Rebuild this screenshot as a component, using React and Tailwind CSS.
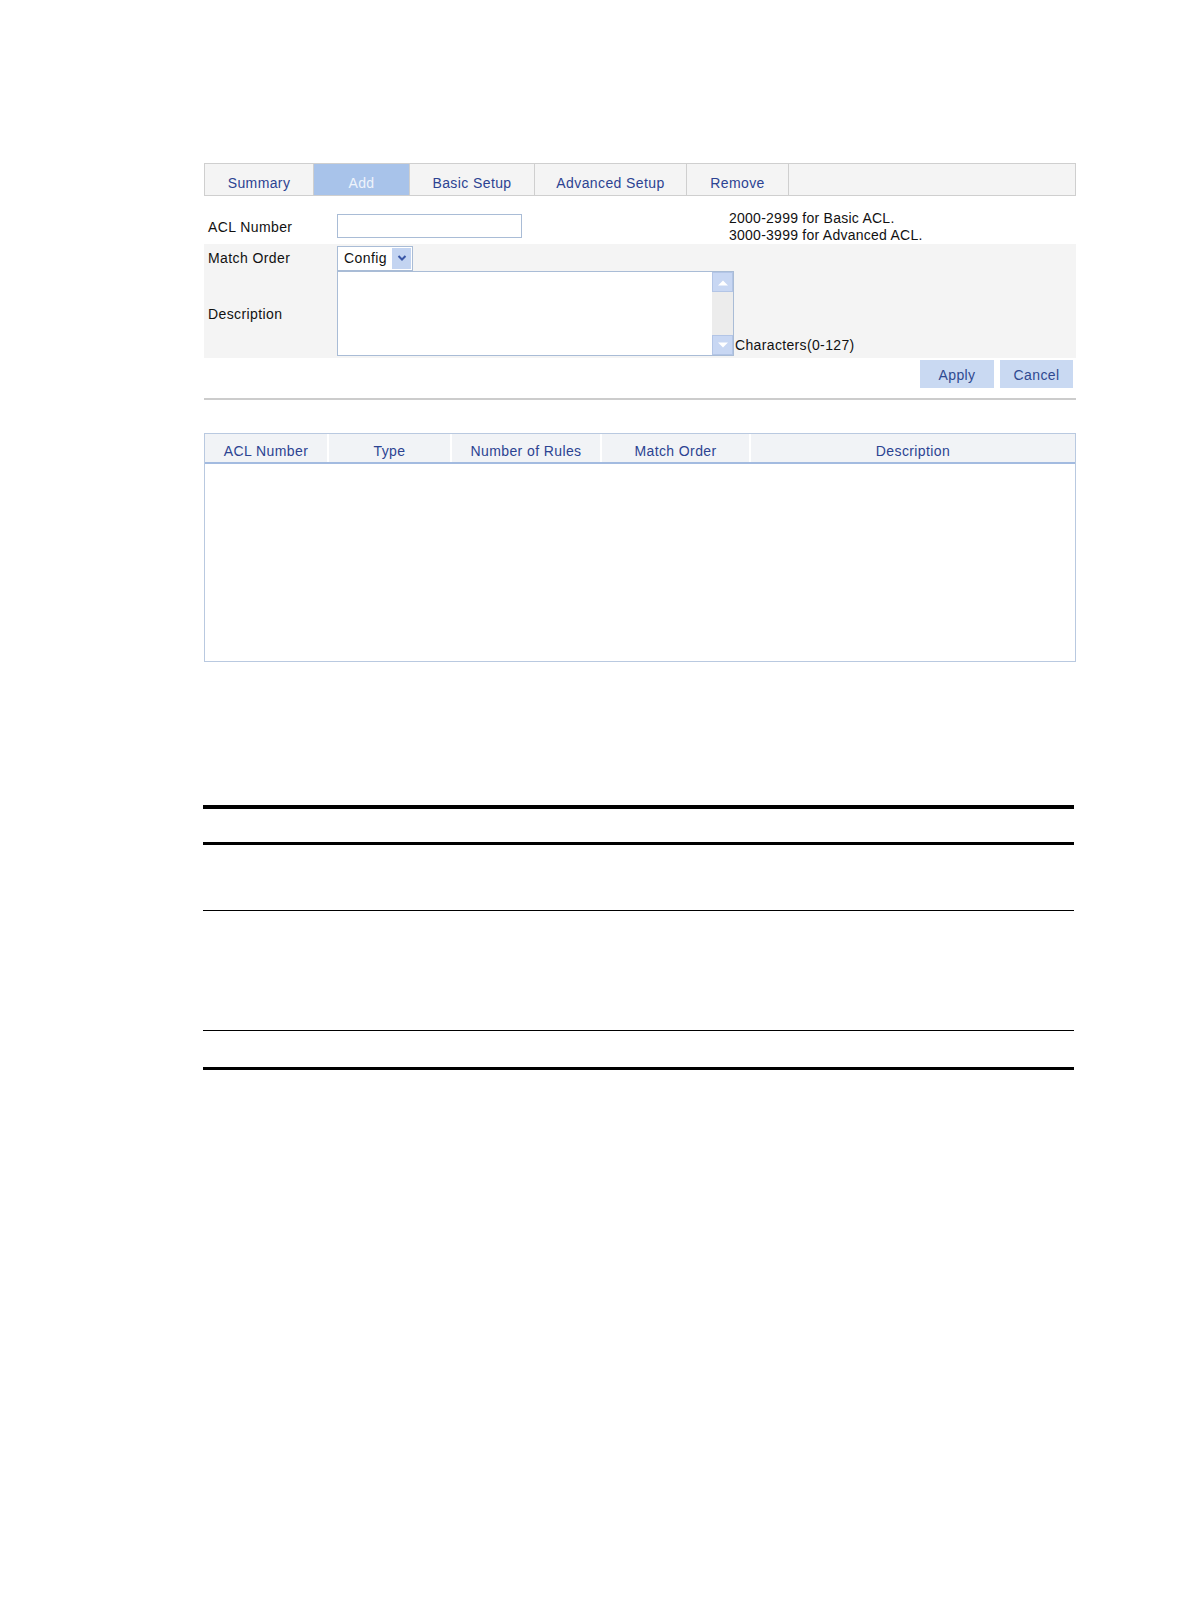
export default function App() {
  const font = { fontFamily: '"Liberation Sans", Arial, sans-serif' };
  const tabs = [
    { label: "Summary", w: "w-[109px]" },
    { label: "Add", w: "w-[96px]", active: true },
    { label: "Basic Setup", w: "w-[125px]" },
    { label: "Advanced Setup", w: "w-[152px]" },
    { label: "Remove", w: "w-[102px]" },
  ];
  const cols = [
    { label: "ACL Number", w: "w-[124px]" },
    { label: "Type", w: "w-[123px]" },
    { label: "Number of Rules", w: "w-[150px]" },
    { label: "Match Order", w: "w-[149px]" },
    { label: "Description", w: "flex-1" },
  ];
  return (
    <div className="w-[1190px] h-[1616px] bg-white text-[14px] tracking-[0.4px] text-[#111]" style={font}>
      <div className="pt-[163px] ml-[204px] w-[872px]">
        {/* Tabs */}
        <div className="flex h-[33px] bg-[#f4f4f4] border border-[#cfcfcf]">
          {tabs.map((t) => (
            <div
              key={t.label}
              className={`${t.w} flex items-center justify-center pt-[7px] border-r border-[#cfcfcf] ${
                t.active ? "bg-[#a8c3ea] text-[#eef3fb]" : "text-[#2c4392]"
              }`}
            >
              {t.label}
            </div>
          ))}
          <div className="flex-1" />
        </div>

        {/* Row 1 */}
        <div className="flex h-[48px] items-end pb-[6px]">
          <div className="w-[133px] pl-[4px]">ACL Number</div>
          <div className="w-[185px] h-[24px] border border-[#a9bcd6] bg-white" />
          <div className="ml-[207px] leading-[17px] self-start pt-[14px] tracking-[0.25px]">
            <div>2000-2999 for Basic ACL.</div>
            <div>3000-3999 for Advanced ACL.</div>
          </div>
        </div>

        {/* Gray block */}
        <div className="bg-[#f4f4f4] h-[114px] flex flex-col">
          <div className="flex items-center h-[27px] pt-[1px]">
            <div className="w-[133px] pl-[4px]">Match Order</div>
            <div className="w-[76px] h-[25px] border border-[#a9bcd6] bg-white flex items-center">
              <span className="pl-[6px] flex-1">Config</span>
              <div className="w-[19px] h-[21px] mr-[1px] bg-[#c3d4f1] flex items-center justify-center">
                <svg width="10" height="8" viewBox="0 0 10 8">
                  <path d="M1.5 2 L5 5.5 L8.5 2" stroke="#3a57a6" strokeWidth="2" fill="none" />
                </svg>
              </div>
            </div>
          </div>
          <div className="flex items-center h-[87px] pb-[2px]">
            <div className="w-[133px] pl-[4px] pt-[2px]">Description</div>
            <div className="w-[397px] h-[85px] border border-[#a9bcd6] bg-white flex">
              <div className="flex-1" />
              <div className="w-[21px] bg-[#ececec] flex flex-col justify-between">
                <div className="h-[20px] bg-[#c8d7f3] border border-[#b3c5e6] flex items-center justify-center">
                  <svg width="12" height="7" viewBox="0 0 12 7">
                    <path d="M1 6.5 L6 1.5 L11 6.5 Z" fill="#ffffff" />
                  </svg>
                </div>
                <div className="h-[20px] bg-[#c8d7f3] border border-[#b3c5e6] flex items-center justify-center">
                  <svg width="12" height="7" viewBox="0 0 12 7">
                    <path d="M1 0.5 L6 5.5 L11 0.5 Z" fill="#ffffff" />
                  </svg>
                </div>
              </div>
            </div>
            <div className="self-end pb-[0px] pl-[1px] tracking-[0.35px]">Characters(0-127)</div>
          </div>
        </div>

        {/* Buttons */}
        <div className="flex justify-end gap-[6px] pr-[3px] pt-[2px]">
          <div className="w-[74px] h-[28px] bg-[#c9d9f2] text-[#2f4990] flex items-center justify-center pt-[2px]">Apply</div>
          <div className="w-[73px] h-[28px] bg-[#c9d9f2] text-[#2f4990] flex items-center justify-center pt-[2px]">Cancel</div>
        </div>

        {/* Separator */}
        <div className="mt-[10px] h-[2px] bg-[#cccccc]" />

        {/* Table */}
        <div className="mt-[33px] h-[229px] border border-[#b9c9e0] flex flex-col">
          <div className="flex h-[30px] bg-[#f1f3f6] border-b-2 border-[#a3bbe0]">
            {cols.map((c, i) => (
              <div
                key={c.label}
                className={`${c.w} flex items-center justify-center text-[#2c4392] pt-[6px] ${
                  i < cols.length - 1 ? "border-r-2 border-white" : ""
                }`}
              >
                {c.label}
              </div>
            ))}
          </div>
          <div className="flex-1 bg-white" />
        </div>
      </div>

      {/* Document table lines */}
      <div className="ml-[203px] w-[871px] mt-[143px]">
        <div className="h-[4px] bg-black" />
        <div className="h-[33px]" />
        <div className="h-[3px] bg-black" />
        <div className="h-[65px]" />
        <div className="h-[1px] bg-black" />
        <div className="h-[119px]" />
        <div className="h-[1px] bg-black" />
        <div className="h-[36px]" />
        <div className="h-[3px] bg-black" />
      </div>
    </div>
  );
}
